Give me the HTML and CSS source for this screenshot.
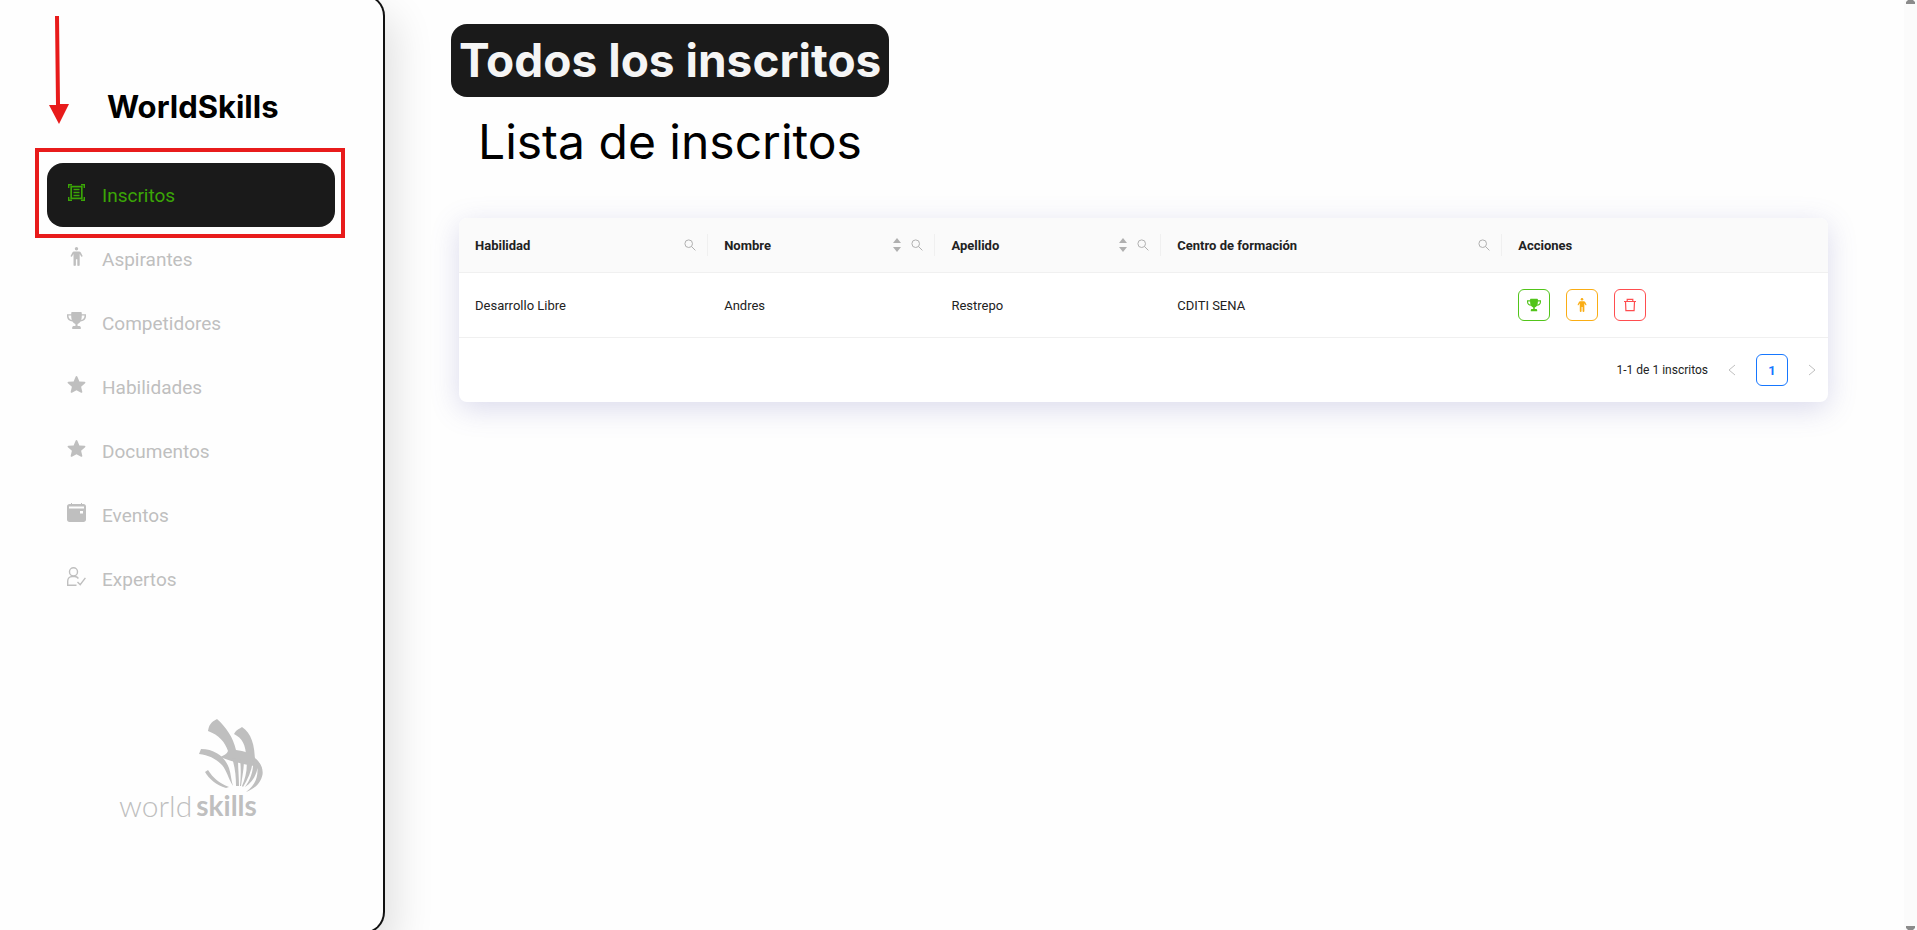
FILE: index.html
```html
<!DOCTYPE html>
<html lang="es">
<head>
<meta charset="utf-8">
<title>WorldSkills - Inscritos</title>
<link rel="stylesheet" href="styles.css">
</head>
<body>
<svg class="sprite" aria-hidden="true">
  <symbol id="scan" viewBox="0 0 19 19"><g fill="none" stroke="currentColor" stroke-width="1.4"><path d="M1.700 5V1.700h3.300M14 1.700h3.300V5M17.300 14v3.300H14M5 17.300H1.700V14"/><rect x="4.200" y="3.600" width="10.600" height="11.800" stroke-width="1.700"/><path d="M6.500 6.500h6M6.500 9.500h6M6.500 12.500h6"/></g></symbol>
  <symbol id="person" viewBox="0 0 19 19"><circle cx="9.500" cy="1.700" r="1.700"/><path d="M7 4.500h5c.8 0 1.400.3 1.800 1l1.700 3.200c.4.900-.8 1.500-1.300.8l-1.500-2.400v11c0 1.200-2.400 1.200-2.400 0v-5.900h-1.400v5.900c0 1.200-2.400 1.200-2.400 0v-11l-1.500 2.400c-.6.800-1.800 0-1.300-.8l1.700-3.200c.3-.7.800-1 1.600-1z"/></symbol>
  <symbol id="trophy" viewBox="0 0 576 512"><path d="M552 64H448V24c0-13-11-24-24-24H152c-13 0-24 11-24 24v40H0v64c0 92 74 150 166 160 20 38 48 60 90 72v60h-40c-36 0-60 20-60 56v24c0 7 5 12 12 12h240c7 0 12-5 12-12v-24c0-36-24-56-60-56h-40v-60c42-12 70-34 90-72 92-10 166-68 166-160V64zM44 108h84c0 56 5 96 18 134-60-14-102-58-102-134zm386 134c13-38 18-78 18-134h84c0 76-42 120-102 134z"/></symbol>
  <symbol id="star" viewBox="0 0 19 19"><path d="M9.500 1c.4 0 .7.300.9.700l2 4.700 5.200.4c.8.100 1.100 1 .5 1.500l-4 3.400 1.200 5.100c.2.800-.6 1.300-1.200.9L9.500 15.200 4.900 17.700c-.6.400-1.400-.1-1.200-.9l1.200-5.100-4-3.400C.3 7.800.6 6.900 1.400 6.800l5.200-.4 2-4.700c.2-.4.500-.7.900-.7z"/></symbol>
  <symbol id="calendar" viewBox="0 0 19 19"><path fill-rule="evenodd" d="M2.500 1H4V0h1v1h9V0h1v1h1.500C18 1 19 2 19 3.500v13c0 1.500-1 2.500-2.500 2.500h-14C1 19 0 18 0 16.500v-13C0 2 1 1 2.500 1zM2 3.500v2h15v-2zM13 8v2.500h3V8z"/></symbol>
  <symbol id="expert" viewBox="0 0 19 19"><g fill="none" stroke="currentColor" stroke-width="1.400"><rect x="2.500" y=".7" width="8" height="8.300" rx="4"/><path d="M9.500 18.200H.7v-4c0-2.700 2-4.700 4.500-4.700h2.600c1.500 0 2.800.8 3.600 2M10.500 15l2.700 2.700 5.200-6.900"/></g></symbol>
  <symbol id="search" viewBox="0 0 12 12"><g fill="none" stroke="currentColor"><circle cx="4.700" cy="4.700" r="3.800"/><path d="M7.400 7.400l4 4"/></g></symbol>
  <symbol id="sorter" viewBox="0 0 8 14"><path d="M4 0l4 5H0zM0 9h8l-4 5z"/></symbol>
  <symbol id="trash" viewBox="0 0 14 14"><path fill="none" stroke="currentColor" stroke-width="1.200" d="M1 3.500h12M4.200 3.300V1.300h5.600v2M2.500 3.500l.4 9.100h8.200l.4-9.100"/></symbol>
  <symbol id="prev" viewBox="0 0 8 12"><path fill="none" stroke="currentColor" d="M7 1L1 6l6 5"/></symbol>
  <symbol id="next" viewBox="0 0 8 12"><path fill="none" stroke="currentColor" d="M1 1l6 5-6 5"/></symbol>
</svg>

<div class="layout">
  <aside class="sidebar">
    <h2 class="brand">WorldSkills</h2>
    <nav class="menu">
      <a class="menu-item active" href="#"><svg><use href="#scan"/></svg><span>Inscritos</span></a>
      <a class="menu-item" href="#"><svg><use href="#person"/></svg><span>Aspirantes</span></a>
      <a class="menu-item" href="#"><svg><use href="#trophy"/></svg><span>Competidores</span></a>
      <a class="menu-item" href="#"><svg><use href="#star"/></svg><span>Habilidades</span></a>
      <a class="menu-item" href="#"><svg><use href="#star"/></svg><span>Documentos</span></a>
      <a class="menu-item" href="#"><svg><use href="#calendar"/></svg><span>Eventos</span></a>
      <a class="menu-item" href="#"><svg><use href="#expert"/></svg><span>Expertos</span></a>
    </nav>
    <div class="logo">
      <svg class="logo-hand" viewBox="0 0 64 75" aria-hidden="true">
        <path d="M18 0C27 8 34 18 37 31c9 1 16 4 21 10 4 5 6 10 5 16-1-4-4-8-8-10-12-2-24-5-34-9 4-2 7-3 8-6C26 23 20 16 9 12c1-6 3-9 9-12z"/>
        <path d="M43 8c9 6 13 17 13 36l-9-6C47 26 43 19 35 15c2-4 5-5 8-7z"/>
        <path d="M2 30c14 0 24 8 28 19 2 6 2 12 4 18-5-8-6-15-11-21C17 40 10 36 0 35z"/>
        <path d="M9 51c5 8 11 13 21 17l-3 1C17 66 10 60 6 53z"/>
        <path d="M33 39l6 1c0 9 1 18 1 27h-3c0-10-1-19-4-28zM41 39l4 2c0 9-2 18-3 26h-1c1-9 1-19 0-28z"/>
        <path d="M47 38l7 3c-1 10-5 19-10 27l-1-1c4-9 6-19 4-29z"/>
        <path d="M54 40c3 1 5 3 5 6-1 9-5 17-13 22 6-8 9-18 8-28z"/>
        <path d="M57 40c12 10 7 27-10 33 10-7 14-17 10-33z"/>
      </svg>
      <div class="logo-name"><span>world</span><strong>skills</strong></div>
    </div>
    <div class="highlight"></div>
    <svg class="arrow" viewBox="0 0 20 108" aria-hidden="true"><path d="M6 0h4l1 88h9l-10 20L0 89h7z"/></svg>
  </aside>

  <main class="content">
    <h1 class="title">Todos los inscritos</h1>
    <h2 class="subtitle">Lista de inscritos</h2>
    <section class="card">
      <table class="grid">
        <colgroup><col class="c-skill"><col class="c-name"><col class="c-surname"><col class="c-center"><col></colgroup>
        <thead>
          <tr>
            <th><div class="head"><span>Habilidad</span><button class="tool" aria-label="Buscar habilidad"><svg class="i-search"><use href="#search"/></svg></button></div></th>
            <th><div class="head"><span>Nombre</span><button class="tool" aria-label="Ordenar por nombre"><svg class="i-sort"><use href="#sorter"/></svg></button><button class="tool" aria-label="Buscar nombre"><svg class="i-search"><use href="#search"/></svg></button></div></th>
            <th><div class="head"><span>Apellido</span><button class="tool" aria-label="Ordenar por apellido"><svg class="i-sort"><use href="#sorter"/></svg></button><button class="tool" aria-label="Buscar apellido"><svg class="i-search"><use href="#search"/></svg></button></div></th>
            <th><div class="head"><span>Centro de formación</span><button class="tool" aria-label="Buscar centro"><svg class="i-search"><use href="#search"/></svg></button></div></th>
            <th><div class="head"><span>Acciones</span></div></th>
          </tr>
        </thead>
        <tbody>
          <tr>
            <td>Desarrollo Libre</td><td>Andres</td><td>Restrepo</td><td>CDITI SENA</td>
            <td><div class="actions">
              <button class="act green" aria-label="Competidor"><svg><use href="#trophy"/></svg></button>
              <button class="act amber" aria-label="Aspirante"><svg><use href="#person"/></svg></button>
              <button class="act red" aria-label="Eliminar"><svg><use href="#trash"/></svg></button>
            </div></td>
          </tr>
        </tbody>
      </table>
      <div class="pager">
        <span class="total">1-1 de 1 inscritos</span>
        <button class="page" aria-label="Anterior" disabled><svg><use href="#prev"/></svg></button>
        <button class="page current">1</button>
        <button class="page" aria-label="Siguiente" disabled><svg><use href="#next"/></svg></button>
      </div>
    </section>
  </main>

  <div class="scroll" aria-hidden="true">
    <svg viewBox="0 0 9 4"><path d="M2 0h5l2 2v2H0V2z"/></svg>
    <svg viewBox="0 0 9 4"><path d="M0 0h9v2L7 4H2L0 2z"/></svg>
  </div>
</div>
</body>
</html>
```
FILE: styles.css
```css
* { box-sizing: border-box; }
body {
  margin: 0;
  background: #fefefe;
  color: #222;
  font-family: Roboto, "Liberation Sans", sans-serif;
  font-size: 13px;
  overflow: hidden;
}
svg { display: block; fill: currentColor; }
button { font: inherit; padding: 0; border: 0; background: none; }
h1, h2 { margin: 0; }
.sprite { position: absolute; width: 0; height: 0; }

.layout { display: flex; height: 100vh; }

.sidebar {
  position: relative;
  flex: none;
  display: flex;
  flex-direction: column;
  width: 385px;
  margin: -6px 0 -4px;
  padding: 88px 48px 0 47px;
  background: #fefefe;
  border: 2px solid #111;
  border-left: 0;
  border-radius: 0 22px 22px 0;
  box-shadow: 10px 20px 40px rgba(0, 0, 0, .12);
}
.brand {
  padding-left: 60px;
  color: #000;
  font: 700 31px/46px Inter, sans-serif;
}
.menu { display: flex; flex-direction: column; margin-top: 33px; }
.menu-item {
  display: flex;
  align-items: center;
  gap: 16px;
  height: 64px;
  padding: 0 20px;
  border-radius: 16px;
  color: #bfbfbf;
  font-size: 19px;
  text-decoration: none;
}
.menu-item svg { width: 19px; height: 19px; margin-bottom: 5px; }
.menu-item.active { background: #1a1a1a; color: #3aa606; }

.logo { width: 144px; margin: 108px 0 0 72px; color: #bfbfbf; }
.logo-hand { width: 64px; height: 75px; margin-left: 80px; }
.logo-name {
  display: flex;
  gap: 4px;
  margin-top: -6px;
  font: 300 30px/34px Lato, sans-serif;
}
.logo-name strong { font-size: 28px; font-weight: 700; }

.highlight {
  position: absolute;
  top: 152px;
  left: 35px;
  width: 310px;
  height: 90px;
  border: 4px solid #e81b1b;
}
.arrow {
  position: absolute;
  top: 20px;
  left: 49px;
  width: 20px;
  height: 108px;
  color: #e81b1b;
}

.content { flex: 1; min-width: 0; padding: 24px 76px 0 66px; }
.title {
  width: fit-content;
  padding: 0 8px;
  border-radius: 16px;
  background: #1a1a1a;
  color: #f5f5f5;
  font: 700 46px/73px Inter, sans-serif;
}
.subtitle {
  padding: 10px 0 0 27px;
  color: #000;
  font: 400 48px/70px Inter, sans-serif;
}
.card {
  margin: 41px 0 0 8px;
  border-radius: 8px;
  background: #fff;
  box-shadow: 0 7px 29px rgba(90, 90, 175, .22);
}
.grid { width: 100%; table-layout: fixed; border-collapse: separate; border-spacing: 0; }
.c-skill { width: 18.2%; }
.c-name { width: 16.6%; }
.c-surname { width: 16.5%; }
.c-center { width: 24.9%; }
th, td { padding: 0 16px; border-bottom: 1px solid #f0f0f0; text-align: left; }
th {
  height: 55px;
  padding-right: 0;
  background: #fafafa;
  font-weight: 700;
}
th:first-child { border-top-left-radius: 8px; }
th:last-child { border-top-right-radius: 8px; }
.head {
  display: flex;
  align-items: center;
  gap: 10px;
  height: 22px;
  padding-right: 11px;
  border-right: 1px solid #f0f0f0;
}
th:last-child .head { border: 0; }
.head span { flex: 1; white-space: nowrap; }
.tool { color: #b0b0b0; }
.i-search { width: 12px; height: 12px; }
.i-sort { width: 8px; height: 14px; }
td { height: 65px; }
.actions { display: flex; gap: 16px; }
.act {
  display: grid;
  place-items: center;
  width: 32px;
  height: 32px;
  border: 1px solid;
  border-radius: 6px;
  background: #fff;
}
.act svg { width: 14px; height: 14px; }
.green { color: #52c41a; }
.amber { color: #faad14; }
.red { color: #ff4d4f; }
.pager { display: flex; justify-content: flex-end; align-items: center; gap: 8px; padding: 16px 0; }
.total { font-size: 12px; }
.page { display: grid; place-items: center; width: 32px; height: 32px; color: #bfbfbf; }
.page svg { width: 8px; height: 12px; }
.page.current {
  border: 1px solid #1677ff;
  border-radius: 6px;
  color: #1677ff;
  font-weight: 700;
}

.scroll {
  flex: none;
  display: flex;
  flex-direction: column;
  justify-content: space-between;
  align-items: center;
  width: 13px;
  background: #fbfbfb;
  color: #8b8b8b;
}
.scroll svg { width: 9px; height: 4px; }
```
